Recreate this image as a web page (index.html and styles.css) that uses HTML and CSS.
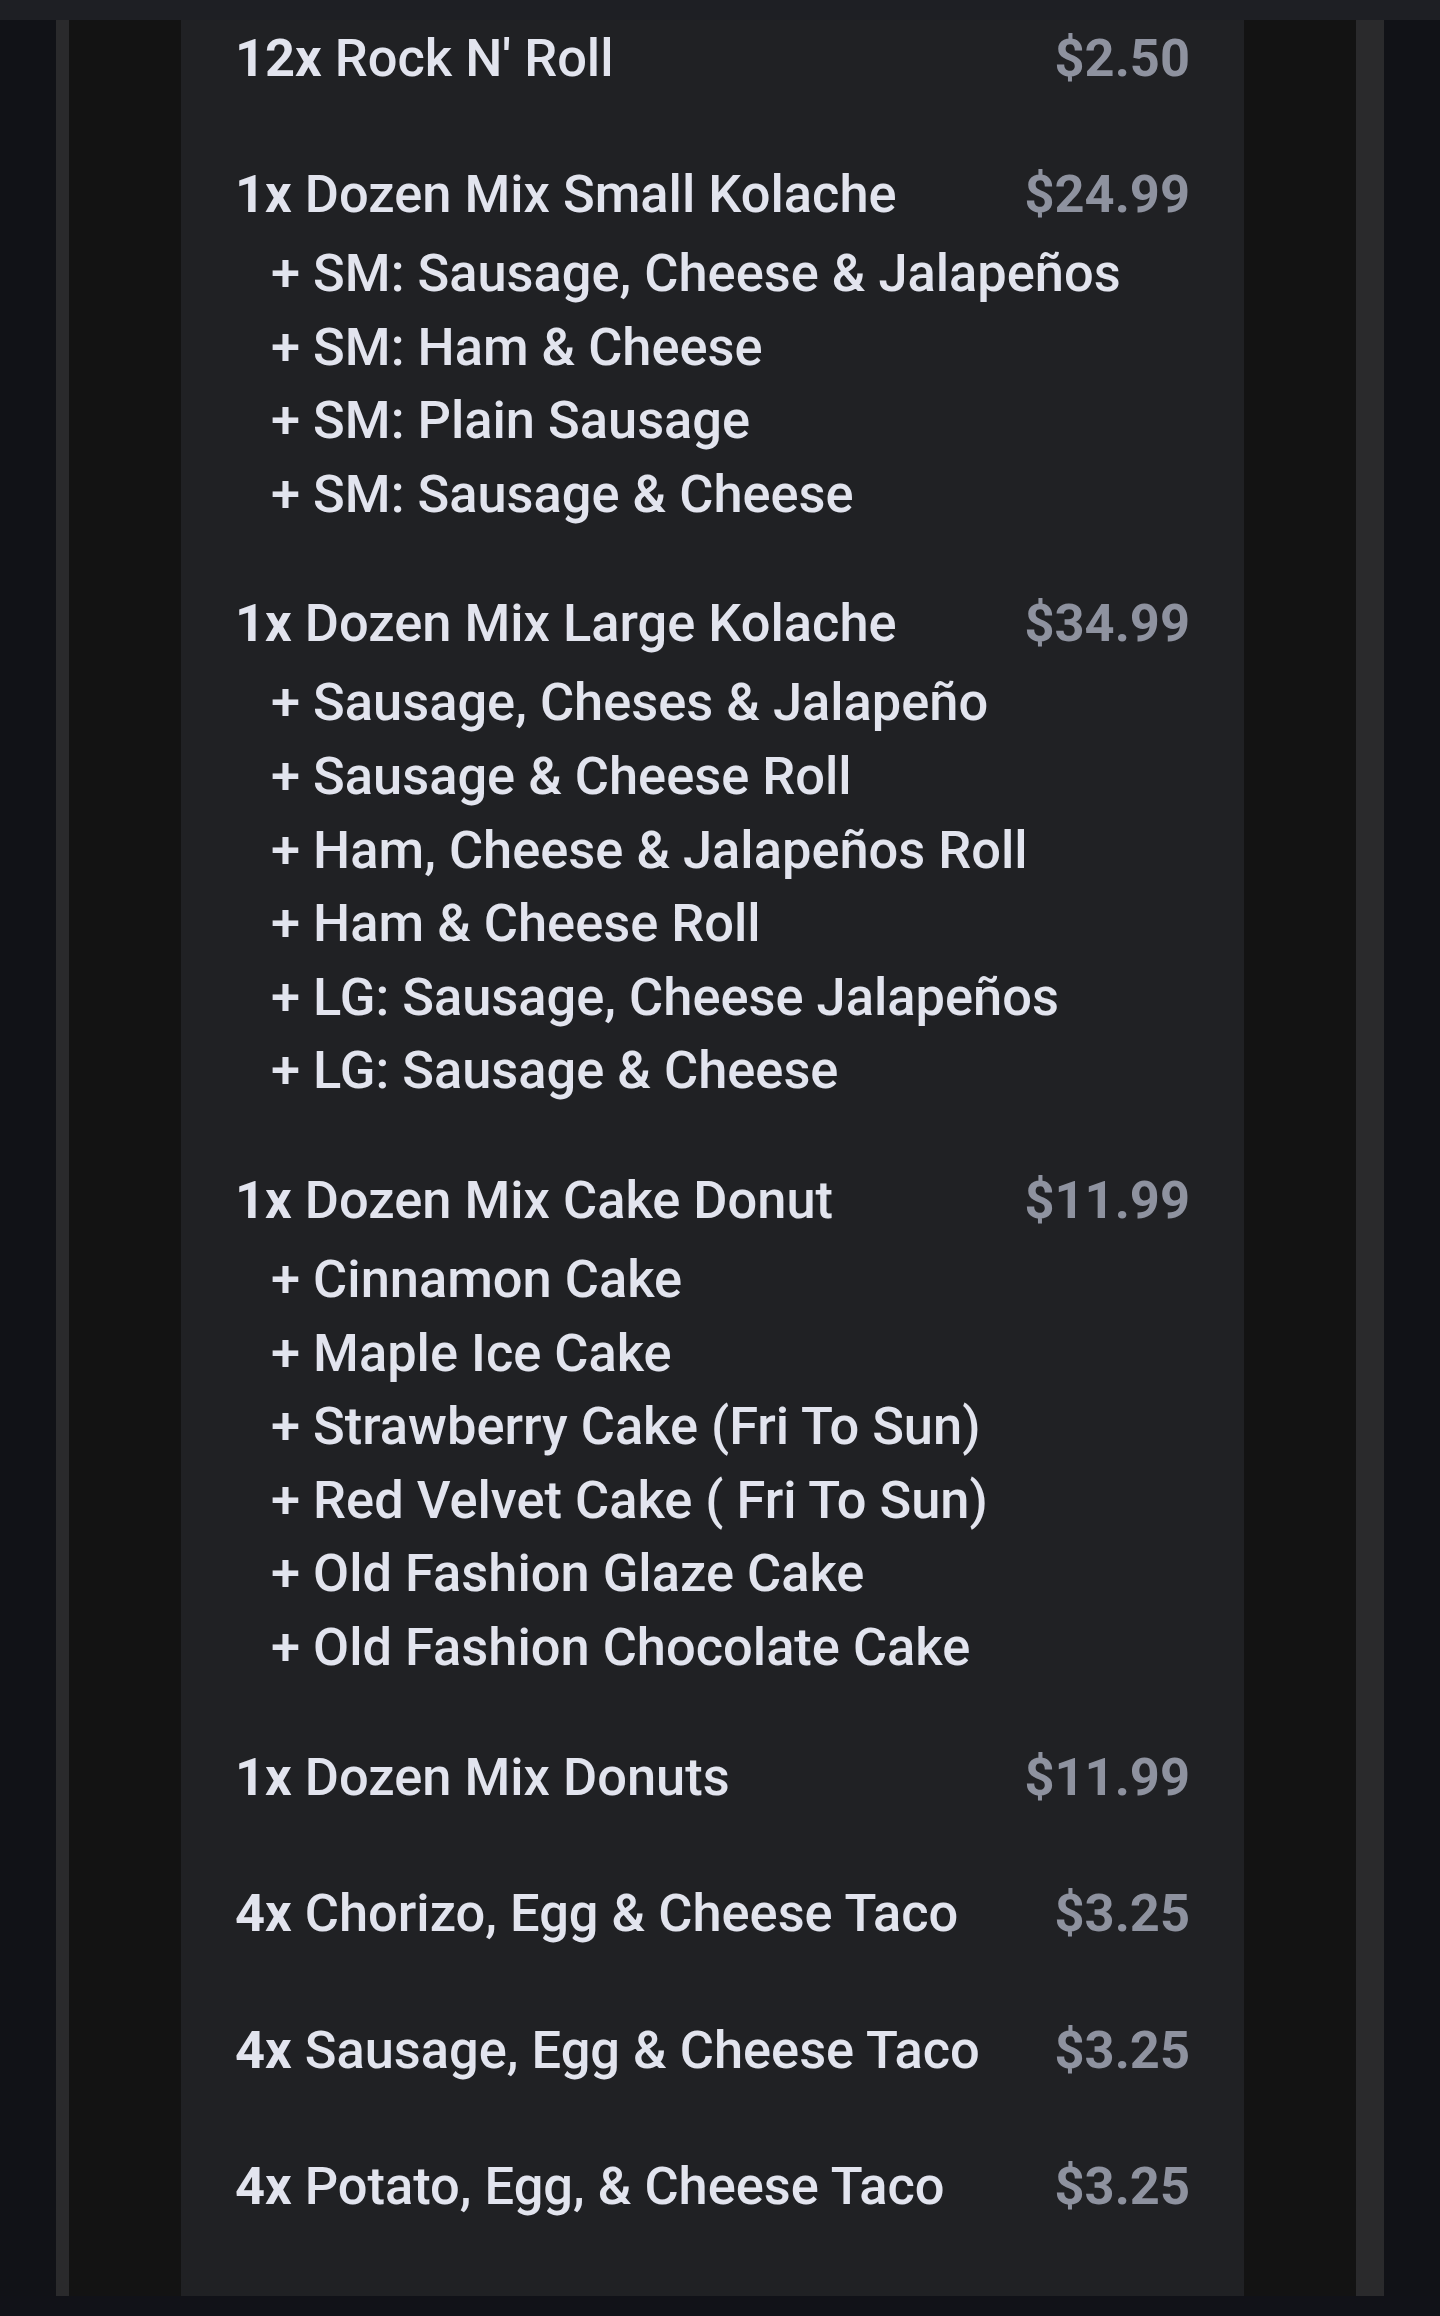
FILE: index.html
```html
<!DOCTYPE html>
<html lang="en">

<head>
    <meta charset="UTF-8">
    <meta name="viewport" content="width=device-width, initial-scale=1.0">
    <title>Order</title>
    <link rel="stylesheet" href="styles.css">
</head>

<body>
    <div class="topBar"></div>

    <div class="frame">
        <div class="edge"></div>
        <div class="rail railLeft"></div>
        <div class="gutter"></div>

        <main class="receipt">
            <div class="item">
                <div class="itemRow">
                    <span class="itemName"><b>12x</b> Rock N' Roll</span>
                    <span class="itemPrice">$2.50</span>
                </div>
            </div>

            <div class="item">
                <div class="itemRow">
                    <span class="itemName"><b>1x</b> Dozen Mix Small Kolache</span>
                    <span class="itemPrice">$24.99</span>
                </div>
                <ul class="options">
                    <li>+ SM: Sausage, Cheese &amp; Jalapeños</li>
                    <li>+ SM: Ham &amp; Cheese</li>
                    <li>+ SM: Plain Sausage</li>
                    <li>+ SM: Sausage &amp; Cheese</li>
                </ul>
            </div>

            <div class="item">
                <div class="itemRow">
                    <span class="itemName"><b>1x</b> Dozen Mix Large Kolache</span>
                    <span class="itemPrice">$34.99</span>
                </div>
                <ul class="options">
                    <li>+ Sausage, Cheses &amp; Jalapeño</li>
                    <li>+ Sausage &amp; Cheese Roll</li>
                    <li>+ Ham, Cheese &amp; Jalapeños Roll</li>
                    <li>+ Ham &amp; Cheese Roll</li>
                    <li>+ LG: Sausage, Cheese Jalapeños</li>
                    <li>+ LG: Sausage &amp; Cheese</li>
                </ul>
            </div>

            <div class="item">
                <div class="itemRow">
                    <span class="itemName"><b>1x</b> Dozen Mix Cake Donut</span>
                    <span class="itemPrice">$11.99</span>
                </div>
                <ul class="options">
                    <li>+ Cinnamon Cake</li>
                    <li>+ Maple Ice Cake</li>
                    <li>+ Strawberry Cake (Fri To Sun)</li>
                    <li>+ Red Velvet Cake ( Fri To Sun)</li>
                    <li>+ Old Fashion Glaze Cake</li>
                    <li>+ Old Fashion Chocolate Cake</li>
                </ul>
            </div>

            <div class="item">
                <div class="itemRow">
                    <span class="itemName"><b>1x</b> Dozen Mix Donuts</span>
                    <span class="itemPrice">$11.99</span>
                </div>
            </div>

            <div class="item">
                <div class="itemRow">
                    <span class="itemName"><b>4x</b> Chorizo, Egg &amp; Cheese Taco</span>
                    <span class="itemPrice">$3.25</span>
                </div>
            </div>

            <div class="item">
                <div class="itemRow">
                    <span class="itemName"><b>4x</b> Sausage, Egg &amp; Cheese Taco</span>
                    <span class="itemPrice">$3.25</span>
                </div>
            </div>

            <div class="item">
                <div class="itemRow">
                    <span class="itemName"><b>4x</b> Potato, Egg, &amp; Cheese Taco</span>
                    <span class="itemPrice">$3.25</span>
                </div>
            </div>
        </main>

        <div class="gutter"></div>
        <div class="rail railRight"></div>
        <div class="edge"></div>
    </div>

    <div class="bottomBar"></div>
</body>

</html>
```

FILE: styles.css
```css
body {
    margin: 0;
    height: 100vh;
    display: flex;
    flex-direction: column;
    overflow: hidden;
    background-color: #111217;
    font-family: Roboto, "Noto Sans", Arial, sans-serif;
}

.topBar {
    height: 20px;
    flex-shrink: 0;
    background-color: #1e1f24;
}

.bottomBar {
    height: 20px;
    flex-shrink: 0;
    background-color: #111218;
}

.frame {
    flex: 1;
    display: flex;
    min-height: 0;
}

.edge {
    width: 56px;
    flex-shrink: 0;
    background-color: #111217;
}

.rail {
    flex-shrink: 0;
    background-color: #2a2a2c;
}

.railLeft {
    width: 13px;
}

.railRight {
    width: 28px;
}

.gutter {
    width: 112px;
    flex-shrink: 0;
    background-color: #131313;
}

.receipt {
    flex: 1;
    display: flex;
    flex-direction: column;
    gap: 58.5px;
    padding: 0 54px;
    overflow: hidden;
    background-color: #202124;
    color: #e2e4ee;
    font-size: 52.4px;
    font-weight: 500;
}

.item:first-child {
    margin-top: -1.5px;
}

.itemRow {
    display: flex;
    justify-content: space-between;
    line-height: 78px;
    white-space: nowrap;
}

.itemName b {
    font-weight: 700;
}

.itemPrice {
    font-weight: 700;
    color: #8e929f;
}

.options {
    list-style: none;
    margin: 4px 0 -5.5px 0;
    padding: 0 0 0 36px;
    line-height: 73.6px;
    white-space: nowrap;
}
```
